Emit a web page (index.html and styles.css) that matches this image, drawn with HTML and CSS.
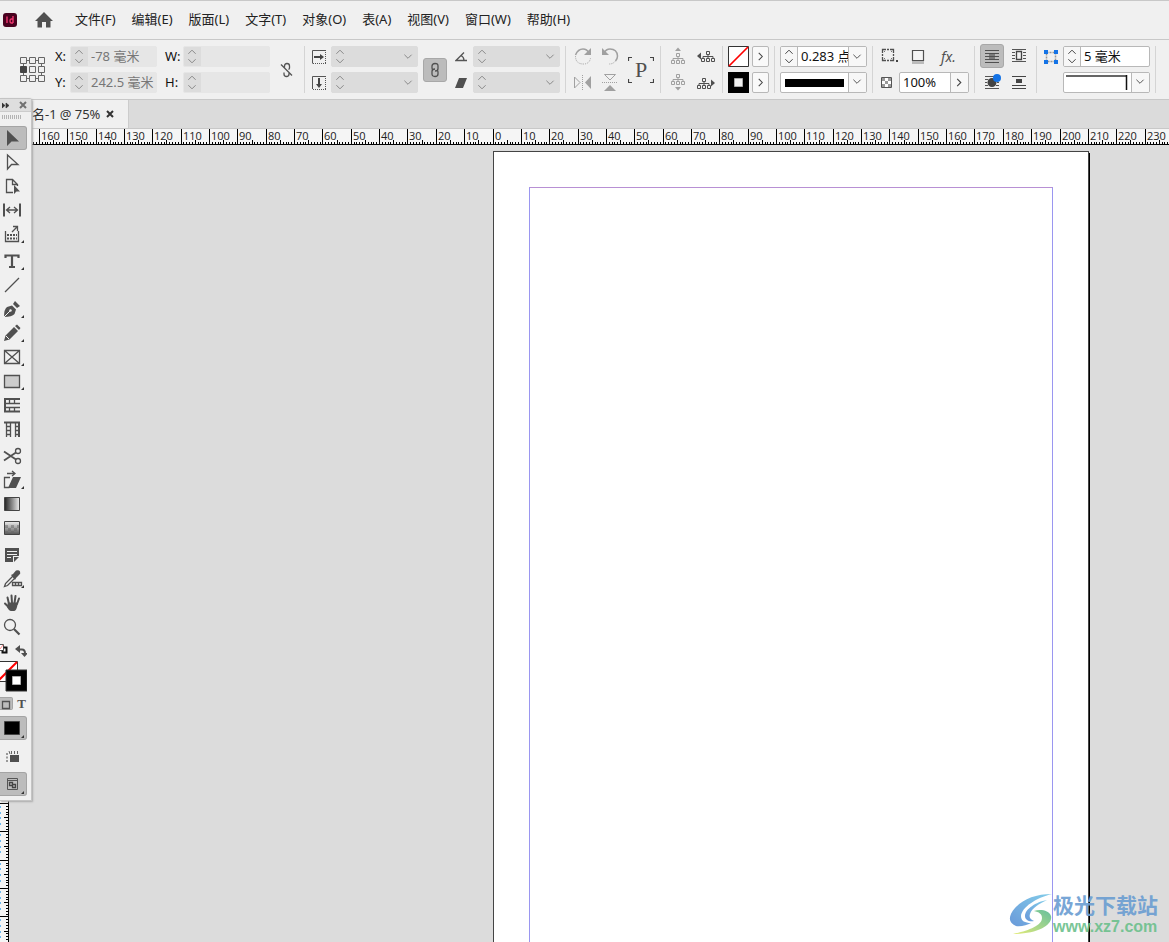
FILE: index.html
```html
<!DOCTYPE html>
<html lang="zh-CN">
<head>
<meta charset="utf-8">
<title>名-1 @ 75%</title>
<link rel="stylesheet" href="styles.css">
</head>
<body>
<svg class="defs" aria-hidden="true">
  <symbol id="updown" viewBox="0 0 17 21"><path d="M4.500 7.500l4-4 4 4M4.500 13.500l4 4 4-4" fill="none" stroke="currentColor" stroke-width="1.100"/></symbol>
  <symbol id="down" viewBox="0 0 17 21"><path d="M4.500 8.500l4 4 4-4" fill="none" stroke="currentColor" stroke-width="1.100"/></symbol>
  <symbol id="right" viewBox="0 0 17 21"><path d="M6.500 6.500l4 4-4 4" fill="none" stroke="currentColor" stroke-width="1.200"/></symbol>
  <symbol id="tree" viewBox="0 0 14 11"><path d="M5.500.5h3v3h-3zM.5 7.500h3v3h-3zM5.500 7.500h3v3h-3zM10.500 7.500h3v3h-3zM7 3.500v4M2 7.500v-2h10v2" fill="none" stroke="currentColor"/></symbol>
</svg>

<header class="menubar">
  <svg class="logo" viewBox="0 0 16 16" width="16" height="16"><rect x="1" y="1" width="14" height="14" rx="3" fill="#49021f"/><path d="M5 4.500v6.500M11 4v7M11 7H9.200q-1.200 0-1.200 2t1.200 2H11" fill="none" stroke="#f2366f" stroke-width="1.400"/></svg>
  <button class="home" aria-label="主页"><svg viewBox="0 0 18 16" width="18" height="16"><path d="M9 0L0 9h2.500v6.500H7V10h4v5.500h4.500V9H18z" fill="#505050"/></svg></button>
  <nav class="menus">
    <button>文件(F)</button><button>编辑(E)</button><button>版面(L)</button><button>文字(T)</button><button>对象(O)</button><button>表(A)</button><button>视图(V)</button><button>窗口(W)</button><button>帮助(H)</button>
  </nav>
</header>

<section class="controls">
  <div class="group g-pos">
    <svg class="refpoint" viewBox="0 0 25 25" width="25" height="25"><g fill="none" stroke="#666"><path d="M3.500 3.500h18v18h-18z"/><g fill="#f0f0f0"><path d="M.5.500h6v6h-6zM9.500.500h6v6h-6zM18.500.500h6v6h-6zM9.500 9.500h6v6h-6zM18.500 9.500h6v6h-6zM.5 18.500h6v6h-6zM9.500 18.500h6v6h-6zM18.500 18.500h6v6h-6z"/></g><path d="M.5 9.500h6v6h-6z" fill="#444" stroke="#444"/></g></svg>
    <div class="stack labelled">
      <div class="row"><label for="x">X:</label><span class="field off"><button aria-label="X 微调"><svg><use href="#updown"/></svg></button><input id="x" value="-78 毫米" disabled></span></div>
      <div class="row"><label for="y">Y:</label><span class="field off"><button aria-label="Y 微调"><svg><use href="#updown"/></svg></button><input id="y" value="242.5 毫米" disabled></span></div>
    </div>
    <div class="stack labelled wide">
      <div class="row"><label for="w">W:</label><span class="field off"><button aria-label="W 微调"><svg><use href="#updown"/></svg></button><input id="w" disabled></span></div>
      <div class="row"><label for="h">H:</label><span class="field off"><button aria-label="H 微调"><svg><use href="#updown"/></svg></button><input id="h" disabled></span></div>
    </div>
    <svg class="unlink" viewBox="0 0 13 16" width="13" height="16"><path d="M4.500 5.500V4q0-2.500 2.500-2.500T9.500 4v2q0 1-1 1.500M4 10.500V12q0 2.500 2.500 2.500T9 12v-1M1 2.500l11 11" fill="none" stroke="#555" stroke-width="1.300"/></svg>
  </div>

  <div class="group g-scale">
    <div class="stack">
      <svg class="row" viewBox="0 0 14 21" width="14" height="21"><path d="M13.500 4.500H.5v13" fill="none" stroke="#555"/><path d="M13.500 4v13M1 17.500h13" stroke="#555" stroke-dasharray="1 1" fill="none"/><path d="M2 11h7" stroke="#444" stroke-width="2"/><path d="M8 8l4 3-4 3z" fill="#444"/></svg>
      <svg class="row" viewBox="0 0 14 21" width="14" height="21"><path d="M.5 17V4.500h13" fill="none" stroke="#555"/><path d="M13.500 4v13M1 17.500h13" stroke="#555" stroke-dasharray="1 1" fill="none"/><path d="M7 6v7" stroke="#444" stroke-width="2"/><path d="M4 12h6l-3 4z" fill="#444"/></svg>
    </div>
    <div class="stack">
      <span class="field dim"><button aria-label="X 缩放微调"><svg><use href="#updown"/></svg></button><input aria-label="X 缩放" disabled><span class="drop"><select aria-label="X 缩放预设"></select><svg><use href="#down"/></svg></span></span>
      <span class="field dim"><button aria-label="Y 缩放微调"><svg><use href="#updown"/></svg></button><input aria-label="Y 缩放" disabled><span class="drop"><select aria-label="Y 缩放预设"></select><svg><use href="#down"/></svg></span></span>
    </div>
    <button class="toggle" aria-label="约束缩放比例"><svg viewBox="0 0 10 16" width="10" height="16"><path d="M3 8Q2 7.500 2 6V4q0-2.500 3-2.500T8 4v2.500Q8 9 5 9M7 8q1 .5 1 2v2q0 2.500-3 2.500T2 12V9.500Q2 7 5 7" fill="none" stroke="#505050" stroke-width="1.300"/></svg></button>
    <div class="stack angles">
      <svg class="row" viewBox="0 0 12 21" width="12" height="21"><path d="M9 6.500L1 14.500h11M6 9.500q3 1.500 3 5" fill="none" stroke="#555" stroke-width="1.300"/></svg>
      <svg class="row" viewBox="0 0 12 21" width="12" height="21"><path d="M4 6h8l-4 10H0z" fill="#505050"/></svg>
    </div>
    <div class="stack">
      <span class="field dim"><button aria-label="旋转微调"><svg><use href="#updown"/></svg></button><input aria-label="旋转角度" disabled><span class="drop"><select aria-label="旋转预设"></select><svg><use href="#down"/></svg></span></span>
      <span class="field dim"><button aria-label="切变微调"><svg><use href="#updown"/></svg></button><input aria-label="切变角度" disabled><span class="drop"><select aria-label="切变预设"></select><svg><use href="#down"/></svg></span></span>
    </div>
  </div>

  <div class="group g-rotate">
    <div class="stack muted">
      <svg class="row" viewBox="0 0 18 21" width="18" height="21"><path d="M1.500 9Q4 3 9 3q4 0 6 4" fill="none" stroke="currentColor" stroke-width="1.500"/><path d="M17 2v7h-7z" fill="currentColor"/><path d="M1.500 10q0 8 8 8 6 0 7-6" fill="none" stroke="currentColor" stroke-dasharray="1 1"/></svg>
      <svg class="row" viewBox="0 0 18 21" width="18" height="21"><path d="M.5 5v11l5.500-5.500z" fill="none" stroke="currentColor"/><path d="M17 4v13l-6-6.500z" fill="currentColor"/><path d="M8.500 3v16" stroke="currentColor" stroke-dasharray="1 1"/></svg>
    </div>
    <div class="stack muted">
      <svg class="row" viewBox="0 0 18 21" width="18" height="21"><path d="M3 7q2-4 6-4 7 0 7.500 7 0 3-2 5" fill="none" stroke="currentColor" stroke-width="1.500"/><path d="M1 2v7h7z" fill="currentColor"/><path d="M14 15.500q-2 2.500-6 2.500" fill="none" stroke="currentColor" stroke-dasharray="1 1"/></svg>
      <svg class="row" viewBox="0 0 18 21" width="18" height="21"><path d="M3.500 2.500h11L9 8z" fill="none" stroke="currentColor"/><path d="M3 19h12l-6-6z" fill="currentColor"/><path d="M1 10.500h16" stroke="currentColor" stroke-dasharray="1 1"/></svg>
    </div>
    <span class="pmark"><svg viewBox="0 0 26 26" width="26" height="26"><path d="M.5 4V.5H4M22 .5h3.500V4M.5 22v3.500H4M22 25.500h3.500V22" fill="none" stroke="#444" stroke-width="1.200"/></svg><b>P</b></span>
  </div>

  <div class="group g-tree">
    <div class="stack muted">
      <svg class="row" viewBox="0 0 18 21" width="18" height="21"><path d="M6 5l3-3.500L12 5z" fill="currentColor"/><use href="#tree" x="2" y="7" width="14" height="11"/></svg>
      <svg class="row" viewBox="0 0 18 21" width="18" height="21"><use href="#tree" x="2" y="2" width="14" height="11"/><path d="M6 15l3 3.500 3-3.500z" fill="currentColor"/></svg>
    </div>
    <div class="stack dark">
      <svg class="row" viewBox="0 0 18 21" width="18" height="21"><path d="M4 6.500v7L0 10z" fill="currentColor"/><use href="#tree" x="4" y="5" width="14" height="11"/></svg>
      <svg class="row" viewBox="0 0 18 21" width="18" height="21"><use href="#tree" x="0" y="6" width="14" height="11"/><path d="M14 7.500v7l4-3.500z" fill="currentColor"/></svg>
    </div>
  </div>

  <div class="group g-paint">
    <div class="stack">
      <svg class="row" viewBox="0 0 21 21" width="21" height="21"><path d="M.5.500h20v20H.5z" fill="#fff" stroke="#333"/><path d="M1 20L20 1" stroke="#f00" stroke-width="1.700"/></svg>
      <svg class="row" viewBox="0 0 21 21" width="21" height="21"><path d="M0 0h21v21H0z"/><path d="M6.500 6.500h8v8h-8z" fill="#f0f0f0" stroke="#aaa"/></svg>
    </div>
    <div class="stack">
      <button class="arrow" aria-label="填色选项"><svg><use href="#right"/></svg></button>
      <button class="arrow" aria-label="描边选项"><svg><use href="#right"/></svg></button>
    </div>
  </div>

  <div class="group g-stroke">
    <div class="stack">
      <span class="field"><button aria-label="描边粗细微调"><svg><use href="#updown"/></svg></button><input aria-label="描边粗细" value="0.283 点"><span class="drop"><select aria-label="描边粗细预设"></select><svg><use href="#down"/></svg></span></span>
      <span class="field preview"><span class="solid"></span><span class="drop"><select aria-label="描边类型"></select><svg><use href="#down"/></svg></span></span>
    </div>
  </div>

  <div class="group g-effects">
    <div class="stack">
      <div class="row trio">
        <svg viewBox="0 0 18 21" width="18" height="21"><path d="M1.500 7V3.500H5M9 3.500h3.500V7M12.500 11v3.500H9M5 14.500H1.500V11M6 3.500h2M6 14.500h2M1.500 8v2M12.500 8v2" fill="none" stroke="#505050" stroke-width="1.300"/><path d="M3 6l1-1M10 5l1 1M3 12l1 1M10 13l1-1" stroke="#777"/><path d="M15 14h2v2h-2z" fill="#444"/></svg>
        <svg viewBox="0 0 14 21" width="14" height="21"><path d="M1 14h12v4H1z" fill="#bbb"/><path d="M1.500 4.500h11v10h-11z" fill="#f4f4f4" stroke="#505050" stroke-width="1.200"/></svg>
        <span class="fx">fx.</span>
      </div>
      <div class="row opacity">
        <svg viewBox="0 0 11 21" width="11" height="21"><path d="M.5 5.500h10v10H.5z" fill="#fff" stroke="#555"/><path d="M1 6h3v3H1zM7 6h3v3H7zM4 9h3v3H4zM1 12h3v3H1zM7 12h3v3H7z" fill="#999"/></svg>
        <span class="field short"><input aria-label="不透明度" value="100%"><button class="end" aria-label="不透明度滑块"><svg><use href="#right"/></svg></button></span>
      </div>
    </div>
  </div>

  <div class="group g-wrap">
    <div class="stack center">
      <button class="toggle wrapbtn" aria-label="无文本绕排"><svg viewBox="0 0 14 14" width="14" height="14"><path d="M0 1.500h14M0 4.500h14M0 7.500h14M0 10.500h14M0 13.500h14" stroke="#505050"/><path d="M4 4h6v7H4z" fill="#505050" opacity=".6"/></svg></button>
      <svg class="row" viewBox="0 0 18 21" width="18" height="21"><path d="M2 4.500h14M2 7.500h3M2 10.500h2M2 13.500h3M2 16.500h14M14 10.500h2M13 13.500h3" stroke="#555"/><circle cx="9" cy="10.500" r="4.500" fill="#444"/><circle cx="14" cy="6" r="4" fill="#1473e6"/></svg>
    </div>
    <div class="stack">
      <svg class="row" viewBox="0 0 14 21" width="14" height="21"><path d="M0 3.500h14M0 6.500h3M0 9.500h3M0 12.500h3M11 6.500h3M11 9.500h3M11 12.500h3M0 15.500h14" stroke="#555"/><path d="M4.500 5.500h5v8h-5z" fill="none" stroke="#444" stroke-width="1.300"/></svg>
      <svg class="row" viewBox="0 0 14 21" width="14" height="21"><path d="M0 4.500h14M0 13.500h14M0 16.500h14" stroke="#444"/><path d="M4 7h6v4H4z" fill="#444"/></svg>
    </div>
  </div>

  <div class="group g-corner">
    <svg class="top" viewBox="0 0 14 21" width="14" height="21"><path d="M2.500 6.500h9v9h-9z" fill="none" stroke="#999" stroke-width="1.500" stroke-dasharray="2 1"/><path d="M0 4h4v4H0zM10 4h4v4h-4zM0 14h4v4H0zM10 14h4v4h-4z" fill="#1473e6"/></svg>
    <div class="stack">
      <span class="field"><button aria-label="转角大小微调"><svg><use href="#updown"/></svg></button><input aria-label="转角大小" value="5 毫米"></span>
      <span class="field preview"><svg class="cornerline" viewBox="0 0 67 19" width="67" height="19"><path d="M2 3h60" stroke="#666" stroke-width="2"/><path d="M62.500 2v15" stroke="#111" stroke-width="1.500"/></svg><span class="drop"><select aria-label="转角形状"></select><svg><use href="#down"/></svg></span></span>
    </div>
  </div>
</section>

<div class="tabs"><div class="tab"><span>名-1</span><span>@ 75%</span><button aria-label="关闭文档"><svg viewBox="0 0 8 8" width="8" height="8"><path d="M1 1l6 6M7 1L1 7" stroke="#333" stroke-width="2"/></svg></button></div></div>

<svg class="hruler" id="hruler"></svg>

<main class="workspace">
  <svg class="vruler" id="vruler"></svg>
  <div class="pasteboard">
    <div class="page"><div class="margins"></div></div>
    <div class="watermark">
      <svg viewBox="0 0 44 42" width="44" height="42"><defs><linearGradient id="wa" x1="0" y1="1" x2="1" y2="0"><stop offset="0" stop-color="#5a8fd6"/><stop offset="1" stop-color="#76c8e8"/></linearGradient><linearGradient id="wb" x1="0" y1="1" x2="1" y2="0"><stop offset="0" stop-color="#e2ea6a"/><stop offset="1" stop-color="#56b993"/></linearGradient></defs><path d="M43 1C27 1 14 6 6 15c-7 8-7 15 1 18 5 1 11-1 15-3-6 0-10-2-10-7C13 14 27 5 43 1z" fill="url(#wa)"/><path d="M38 7c-11 2-22 9-22 16 0 4 4 6 9 5-4-2-5-4-4-7 2-6 9-10 17-14z" fill="url(#wa)"/><path d="M25 18c6-2 15-1 17 5 2 9-13 18-38 18 14-3 29-8 29-16 0-4-3-6-8-7z" fill="url(#wb)"/></svg>
      <div><strong>极光下载站</strong><em>www.xz7.com</em></div>
    </div>
  </div>
</main>

<aside class="tools">
  <div class="tools-head">
    <svg viewBox="0 0 8 7" width="8" height="7"><path d="M0 1l3 2.500L0 6zM4 1l3 2.500L4 6z" fill="#333" stroke="#333" stroke-width=".7"/></svg>
    <button aria-label="关闭工具"><svg viewBox="0 0 8 8" width="8" height="8"><path d="M1 1l6 6M7 1L1 7" stroke="#707070" stroke-width="2"/></svg></button>
  </div>
  <div class="grip"></div>
  <div class="set">
    <button class="on" aria-label="选择"><svg viewBox="0 0 24 24"><path d="M7 4v16l4.500-4.500H19z" fill="#505050"/></svg></button>
    <button aria-label="直接选择"><svg viewBox="0 0 24 24"><path d="M7.500 5v14l4-4.500H18z" class="ln"/></svg></button>
    <button aria-label="页面"><svg viewBox="0 0 24 24"><path d="M13 18.500H6.500v-13h6l5 5V12M12.500 5.500v5h5" class="ln"/><path d="M14 11v9l2.500-2.500H20z" fill="#505050"/></svg></button>
    <button aria-label="间隙"><svg viewBox="0 0 24 24"><path d="M4 5.500v13M20 5.500v13" fill="none" stroke="#505050" stroke-width="2"/><path d="M7 12h10M10 9l-3.500 3 3.500 3M14 9l3.500 3-3.500 3" class="ln"/></svg></button>
    <button aria-label="内容收集器"><svg viewBox="0 0 24 24"><path d="M5.500 9v10.500h13V9" class="ln"/><path d="M7 12h2v2H7zM10 12h2v2h-2zM13 12h2v2h-2zM16 12h1v2h-1zM7 15.500h2v2H7zM10 15.500h2v2h-2zM13 15.500h2v2h-2zM16 15.500h1v2h-1z" fill="#505050"/><path d="M12 10l5-5M13 4.500h4.500V9" class="ln"/><path d="M24 18v3h-3z" fill="#333"/></svg></button>
  </div>
  <div class="set">
    <button aria-label="文字"><svg viewBox="0 0 24 24"><path d="M5.500 9V6.500h13V9M12 6.500V18M9 18h6" fill="none" stroke="#505050" stroke-width="2.200"/><path d="M24 18v3h-3z" fill="#333"/></svg></button>
    <button aria-label="直线"><svg viewBox="0 0 24 24"><path d="M5 19L19 5" class="ln"/></svg></button>
    <button aria-label="钢笔"><svg viewBox="0 0 24 24"><path d="M4 20q0-8 3-10l5-1.500 4 4-1.500 4.500Q12 20 4 20zM13 7l2-3 5 5-3 2z" fill="#505050"/><path d="M4 20l6-6" stroke="#f0f0f0"/><circle cx="10.500" cy="13.500" r="1.200" fill="#f0f0f0"/><path d="M24 18v3h-3z" fill="#333"/></svg></button>
    <button aria-label="铅笔"><svg viewBox="0 0 24 24"><path d="M4 20l1.500-5.500L14 6l4 4-8.500 8.500zM15 5l2-1.500L20.500 7 19 9z" fill="#505050"/><path d="M6 15l3 3" stroke="#f0f0f0"/><path d="M24 18v3h-3z" fill="#333"/></svg></button>
    <button aria-label="矩形框架"><svg viewBox="0 0 24 24"><path d="M4.500 5.500h15v13h-15zM4.500 5.500l15 13M19.500 5.500l-15 13" class="ln"/><path d="M24 18v3h-3z" fill="#333"/></svg></button>
    <button aria-label="矩形"><svg viewBox="0 0 24 24"><path d="M4.500 6.500h15v12h-15z" fill="#ccc" stroke="#505050" stroke-width="1.300"/><path d="M24 18v3h-3z" fill="#333"/></svg></button>
    <button aria-label="水平网格"><svg viewBox="0 0 24 24"><path d="M5 6v13M4 6h16M4 18.500h16" fill="none" stroke="#505050" stroke-width="2"/><path d="M5 10.500h15M5 14.500h15M9.500 6.500v4M14.500 6.500v4M9.500 14.500v4M14.500 14.500v4" class="ln"/></svg></button>
    <button aria-label="垂直网格"><svg viewBox="0 0 24 24"><path d="M4 5.500h16M19 5v15" fill="none" stroke="#505050" stroke-width="2"/><path d="M6.500 5v15M10.500 5v15M15.500 5v15M6.500 9.500h4M6.500 13.500h4M15.500 9.500h4M15.500 13.500h4M6.500 17.500h4M15.500 17.500h4" class="ln"/></svg></button>
  </div>
  <div class="set">
    <button aria-label="剪刀"><svg viewBox="0 0 24 24"><circle cx="18" cy="7" r="2.500" class="ln"/><circle cx="18" cy="17" r="2.500" class="ln"/><path d="M4 7.500L16 15.500M4 16.500L16 8.500" fill="none" stroke="#505050" stroke-width="1.800"/></svg></button>
    <button aria-label="自由变换"><svg viewBox="0 0 24 24"><path d="M10 9.500H4.500v10h5" class="ln"/><path d="M13 9h8l-5 11H8z" fill="#505050"/><path d="M7 5.500h7M12 3l3 2.500L12 8" class="ln"/><path d="M24 18v3h-3z" fill="#333"/></svg></button>
    <button aria-label="渐变色板"><svg viewBox="0 0 24 24"><defs><linearGradient id="g1"><stop stop-color="#222"/><stop offset="1" stop-color="#eee"/></linearGradient><linearGradient id="g2" x2="0" y2="1"><stop stop-color="#eee"/><stop offset="1" stop-color="#555"/></linearGradient></defs><path d="M4.500 5.500h15v13h-15z" fill="url(#g1)" stroke="#444"/></svg></button>
    <button aria-label="渐变羽化"><svg viewBox="0 0 24 24"><path d="M4.500 5.500h15v13h-15z" fill="url(#g2)" stroke="#444"/><path d="M5 9h3v3H5zM11 9h3v3h-3zM17 9h2v3h-2zM8 12h3v3H8zM14 12h3v3h-3zM5 15h3v3H5zM11 15h3v3h-3z" fill="#666" opacity=".5"/></svg></button>
  </div>
  <div class="set">
    <button aria-label="附注"><svg viewBox="0 0 24 24"><path d="M5 5h14v8h-6v6H5z" fill="#505050"/><path d="M7 8.500h10M7 11.500h10M7 14.500h4" stroke="#f0f0f0" fill="none"/><path d="M14 14h5l-5 5z" fill="#505050"/></svg></button>
    <button aria-label="吸管"><svg viewBox="0 0 24 24"><path d="M4.500 19.500l1-3L13 9l2 2-7.500 7.500z" class="ln"/><path d="M11 8l2-1 3-3.500q3-1 4 1t-1 3.500L16 11l-1 2z" fill="#505050"/><path d="M12.500 15.500h9v3h-9zM15.500 15.500v3M18.500 15.500v3" class="ln"/><path d="M24 18v3h-3z" fill="#333"/></svg></button>
    <button aria-label="抓手"><svg viewBox="0 0 24 24"><path d="M9 13L7.500 6.500M12 12l-.5-7.500M14.500 12l1-7M17 13l2-5.500M8.500 16L5 12.500" fill="none" stroke="#505050" stroke-width="2" stroke-linecap="round"/><path d="M8 11.500h10L17 16q-1 4-3 4h-3q-2 0-4-4z" fill="#505050"/></svg></button>
    <button aria-label="缩放"><svg viewBox="0 0 24 24"><circle cx="10" cy="10" r="5.500" class="ln"/><path d="M14 14l5.500 5.500" stroke="#505050" stroke-width="2.200"/></svg></button>
  </div>
  <div class="paint">
    <svg viewBox="0 0 27 51" width="27" height="51"><path d="M-2 2.500h5.500v6H-2z" fill="#fff" stroke="#555"/><path d="M0 7l3-4" stroke="#f88"/><path d="M3.500 5.500h3v5h-4v-2" fill="none" stroke="#111" stroke-width="2"/><path d="M18 7.500h4q3 0 3 4" fill="none" stroke="#505050" stroke-width="2"/><path d="M20 3v8l-5-4zM21 11h7l-3.500 4z" fill="#505050"/><path d="M-2 19.500h19.500v20H-2z" fill="#fff" stroke="#333"/><path d="M-2 39L17 20" stroke="#f00" stroke-width="2"/><path d="M6 28h21v21H6z" stroke="#333"/><path d="M12.500 34.500h8v8h-8z" fill="#fff" stroke="#aaa"/></svg>
  </div>
  <div class="apply"><button class="on" aria-label="格式针对容器"><svg viewBox="0 0 13 13" width="13" height="13"><path d="M2.500 3.500h7v7h-7z" class="ln"/></svg></button><button aria-label="格式针对文本"><b>T</b></button></div>
  <div class="set spread">
    <button class="on" aria-label="应用颜色"><svg viewBox="0 0 24 24"><path d="M4.500 5.500h15v13h-15z" stroke="#444"/><path d="M24 19v3h-3z" fill="#333"/></svg></button>
    <button aria-label="视图选项"><svg viewBox="0 0 24 24"><path d="M10 11h9v7h-9z" fill="#505050"/><path d="M11.500 7v3M14.500 7v3M17.500 7v3M9 7l1 3" stroke="#666"/><path d="M6 9h2v2H6zM6 12.500h2v2H6zM6 16h2v2H6z" fill="#999"/></svg></button>
    <button class="on" aria-label="屏幕模式"><svg viewBox="0 0 24 24"><path d="M7.500 6.500h10v11h-10zM7.500 8.500h10" fill="none" stroke="#555"/><path d="M9.500 10.500h3v3h-3zM12.500 12.500h3v3h-3z" fill="none" stroke="#444" stroke-width="1.300"/><path d="M24 19v3h-3z" fill="#333"/></svg></button>
  </div>
</aside>
<script src="rulers.js"></script>
</body>
</html>
```

FILE: styles.css
```css
* { box-sizing: border-box; }
html, body { height: 100%; }
body {
  margin: 0;
  display: flex;
  flex-direction: column;
  position: relative;
  overflow: hidden;
  background: #dcdcdc;
  color: #222;
  font: 13px/21px "Noto Sans", "Noto Sans CJK SC", sans-serif;
}
button, input, select { font: inherit; color: inherit; margin: 0; padding: 0; border: 0; background: none; min-width: 0; }
svg { display: block; flex: none; }
.defs { position: absolute; width: 0; height: 0; }

.menubar {
  flex: none;
  display: flex;
  align-items: center;
  height: 40px;
  background: #f0f0f0;
  border-top: 1px solid #c8c8c8;
  border-bottom: 1px solid #c8c8c8;
  padding-left: 2px;
}
.home { margin-left: 17px; }
.menus { display: flex; gap: 16px; margin-left: 22px; padding-bottom: 2px; }
.menus button { white-space: nowrap; }

.controls {
  flex: none;
  display: flex;
  background: #f0f0f0;
  border-bottom: 1px solid #c8c8c8;
  padding: 6px 0;
  color: #111;
}
.group { display: flex; align-items: center; height: 47px; flex: none; border-right: 1px solid #d4d4d4; }
.stack { display: flex; flex-direction: column; gap: 5px; }
.center { align-items: center; }
.row { height: 21px; display: flex; align-items: center; }
.muted { color: #a0a0a0; }
.dark { color: #505050; }
.field {
  display: flex;
  width: 87px;
  height: 21px;
  background: #fff;
  border: 1px solid #b8b8b8;
  border-radius: 2px;
  overflow: hidden;
}
.field > button { width: 17px; flex: none; border-right: 1px solid #b8b8b8; background: #f7f7f7; color: #444; }
.field > button svg, .drop svg { width: 16px; height: 19px; }
.arrow svg { width: 15px; height: 19px; }
.field input { flex: 1; width: 0; height: 19px; padding-left: 3px; }
.field > button.end { border: 0; border-left: 1px solid #b8b8b8; width: 18px; }
.off { background: #e6e6e6; border-color: #e6e6e6; color: #777; }
.off > button { background: #dcdcdc; border-color: #dcdcdc; color: #888; }
.dim { background: #dcdcdc; border-color: #dcdcdc; }
.dim > button { background: #dcdcdc; border-color: #dcdcdc; color: #888; }
.drop { display: grid; flex: none; width: 18px; border-left: 1px solid #b8b8b8; color: #555; background: #f7f7f7; }
.drop > * { grid-area: 1 / 1; }
.drop select { appearance: none; width: 17px; }
.drop svg { pointer-events: none; }
.dim .drop { border-color: #dcdcdc; background: #dcdcdc; color: #888; }
.preview { align-items: center; }
.solid { flex: 1; height: 8px; margin: 0 4px; background: #000; }
.toggle {
  width: 24px;
  height: 24px;
  background: #bcbcbc;
  border: 1px solid #a8a8a8;
  border-radius: 3px;
  display: grid;
  place-items: center;
}
.arrow { width: 17px; height: 21px; border: 1px solid #b8b8b8; border-radius: 2px; background: #f9f9f9; display: grid; place-items: center; color: #444; }

.g-pos { padding: 0 11px 0 20px; }
.labelled { margin-left: 10px; }
.labelled label { width: 15px; }
.labelled.wide { margin-left: 8px; }
.wide label { width: 18px; }
.labelled .off { flex: none; }
.unlink { margin-left: 10px; }
.g-scale { padding: 0 5px 0 7px; gap: 5px; }
.angles { margin: 0 1px 0 3px; }
.g-rotate { padding: 0 6px 0 8px; gap: 9px; }
.pmark { display: grid; place-items: center; color: #505050; }
.pmark > * { grid-area: 1 / 1; }
.pmark b { font: 22px/26px "Liberation Serif", serif; }
.g-tree { padding: 0 7px 0 8px; gap: 10px; }
.g-paint { padding: 0 5px; gap: 3px; }
.g-stroke { padding: 0 5px; }
.g-effects { padding: 0 5px 0 8px; }
.trio { gap: 12px; }
.fx { font-style: italic; font-size: 14px; color: #505050; margin-left: 4px; }
.opacity { gap: 7px; }
.field.short { width: 70px; }
.g-wrap { padding: 0 10px 0 5px; gap: 8px; align-items: end; }
.g-wrap .center { gap: 4px; }
.g-corner { padding: 0 5px 0 7px; gap: 5px; align-items: start; }

.tabs { flex: none; display: flex; height: 29px; background: #dbdbdb; border-bottom: 1px solid #c8c8c8; }
.tab { display: flex; align-items: center; padding: 0 14px 0 32px; background: #f0f0f0; border-right: 1px solid #ccc; color: #333; white-space: nowrap; }
.tab span + span { margin: 0 6px 0 3px; }

.hruler { width: 100%; height: 16px; background: #f5f5f5; border-bottom: 1px solid #000; }
.hruler text { font: 11px "Open Sans", sans-serif; fill: #222; }

.workspace { flex: 1; min-height: 0; display: flex; }
.vruler { width: 9px; height: 100%; background: #f5f5f5; border-right: 1px solid #000; }
.pasteboard { flex: 1; position: relative; overflow: hidden; background: #dcdcdc; }
.page {
  position: absolute;
  left: 484px;
  top: 6px;
  width: 596px;
  height: 843px;
  background: #fff;
  border: 1px solid #444;
  box-shadow: 1px 2px 0 #000;
}
.margins {
  position: absolute;
  inset: 35px;
  border: 1px solid #9a96f0;
  border-top-color: #b890d4;
}
.watermark { position: absolute; right: 11px; bottom: 7px; display: flex; align-items: center; opacity: .9; }
.watermark div { display: flex; flex-direction: column; gap: 3px; }
.watermark strong { font: bold 21px/24px "Noto Sans CJK SC", sans-serif; color: #6a9dd2; }
.watermark em { font: bold 16px/16px "Liberation Sans", sans-serif; color: #6cc08c; }

.tools {
  position: absolute;
  left: 0;
  top: 98px;
  width: 32px;
  padding-bottom: 4px;
  background: #f0f0f0;
  border-top: 1px solid #c4c4c4;
  border-right: 1px solid #c4c4c4;
  border-bottom: 1px solid #c4c4c4;
  border-top-right-radius: 3px;
  box-shadow: 1px 1px 2px #aaa;
}
.tools-head { display: flex; align-items: center; justify-content: space-between; height: 13px; padding: 0 4px 0 2px; background: #dedede; border-bottom: 1px solid #ccc; }
.grip { height: 4px; width: 20px; margin: 3px 0 7px 2px; background: repeating-linear-gradient(90deg, #b4b4b4 0 1px, transparent 1px 2px); }
.set { display: flex; flex-direction: column; margin-bottom: 3px; }
.set button { width: 27px; height: 24px; border: 1px solid transparent; border-left: 0; border-radius: 0 3px 3px 0; display: flex; align-items: center; }
.set svg { width: 24px; height: 24px; }
.set .on, .apply .on { background: #bcbcbc; border: 1px solid #a4a4a4; border-left: 0; }
.ln { fill: none; stroke: #505050; stroke-width: 1.300px; }
.apply { display: flex; align-items: center; gap: 2px; margin: 4px 0 6px; height: 13px; }
.apply button { width: 13px; height: 13px; display: grid; place-items: center; border-radius: 0 2px 2px 0; }
.apply b { font: bold 13px/13px "Liberation Serif", serif; color: #505050; }
.spread { gap: 4px; margin: 0; }
```

FILE: rulers.js
```js
const NS = "http://www.w3.org/2000/svg";
const PX_PER_MM = 2.835;

function add(parent, name, attrs, text) {
  const el = document.createElementNS(NS, name);
  for (const key in attrs) el.setAttribute(key, attrs[key]);
  if (text !== undefined) el.textContent = text;
  parent.appendChild(el);
}

function tickLength(mm, full, mid, small) {
  if (mm % 10 === 0) return full;
  return mm % 5 === 0 ? mid : small;
}

function drawHorizontal() {
  const svg = document.getElementById("hruler");
  const origin = 493;
  svg.replaceChildren();
  const first = Math.ceil(-(origin - 32) / PX_PER_MM);
  const last = Math.floor((window.innerWidth - origin) / PX_PER_MM);
  for (let mm = first; mm <= last; mm++) {
    const x = Math.floor(origin + mm * PX_PER_MM);
    const h = tickLength(mm, 15, 4, 2);
    add(svg, "rect", { x, y: 15 - h, width: 1, height: h });
    if (mm % 10 === 0) add(svg, "text", { x: x + 2, y: 11 }, Math.abs(mm));
  }
}

function drawVertical() {
  const svg = document.getElementById("vruler");
  const origin = 6;
  svg.replaceChildren();
  for (let mm = 0; mm * PX_PER_MM < window.innerHeight; mm++) {
    const y = Math.round(origin + mm * PX_PER_MM);
    const w = tickLength(mm, 8, 4, 2);
    add(svg, "rect", { x: 8 - w, y, width: w, height: 1 });
    if (mm % 10 > 0 && mm % 10 < 8 && mm % 2) add(svg, "rect", { x: 0, y, width: 1, height: 2, fill: "#6ab8f0" });
  }
}

function draw() {
  drawHorizontal();
  drawVertical();
}

window.addEventListener("resize", draw);
draw();
```
